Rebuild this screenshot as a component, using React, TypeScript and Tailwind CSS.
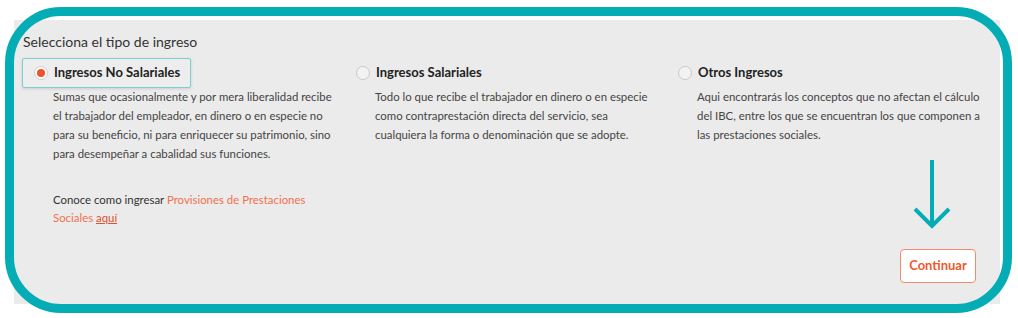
import { useState } from "react";

const opciones = [
  {
    id: "no-salariales",
    label: "Ingresos No Salariales",
    lines: [
      "Sumas que ocasionalmente y por mera liberalidad recibe",
      "el trabajador del empleador, en dinero o en especie no",
      "para su beneficio, ni para enriquecer su patrimonio, sino",
      "para desempeñar a cabalidad sus funciones.",
    ],
  },
  {
    id: "salariales",
    label: "Ingresos Salariales",
    lines: [
      "Todo lo que recibe el trabajador en dinero o en especie",
      "como contraprestación directa del servicio, sea",
      "cualquiera la forma o denominación que se adopte.",
    ],
  },
  {
    id: "otros",
    label: "Otros Ingresos",
    lines: [
      "Aqui encontrarás los conceptos que no afectan el cálculo",
      "del IBC, entre los que se encuentran los que componen a",
      "las prestaciones sociales.",
    ],
  },
];

export default function App() {
  const [tipo, setTipo] = useState("no-salariales");

  return (
    <div className="relative w-[1018px] h-[318px] bg-white pl-[14px] pt-[20px] font-['Lato',sans-serif] text-[#333]">
      {/* Panel */}
      <div className="flex flex-col w-[986px] h-[284px] bg-[#ebebeb] pl-[8px] pt-[13px] pr-[24px] pb-[21px]">
        <h2 className="ml-[1px] text-[14px] leading-[18px] text-[#333]">Selecciona el tipo de ingreso</h2>

        <div className="flex mt-[7px]">
          {opciones.map((o, i) => {
            const activo = tipo === o.id;
            return (
              <div key={o.id} className={i === 2 ? "w-[300px]" : "w-[322px]"}>
                <button
                  onClick={() => setTipo(o.id)}
                  className={
                    "flex items-center gap-[6px] h-[30px] pl-[11px] pr-[10px] rounded-[2px] border " +
                    (activo
                      ? "border-[#7ccfd2] bg-[#ededed] shadow-[0_1px_3px_rgba(0,0,0,0.12)]"
                      : "border-transparent")
                  }
                >
                  <span
                    className={
                      "flex items-center justify-center w-[14px] h-[14px] rounded-full border " +
                      (activo ? "bg-white border-[#cfcfcf]" : "bg-[#f2f2f2] border-[#c9c9c9]")
                    }
                  >
                    {activo && <span className="w-[8px] h-[8px] rounded-full bg-[#f0522a]" />}
                  </span>
                  <span className="text-[13px] font-bold text-[#222]">{o.label}</span>
                </button>
                <div className="ml-[31px] -mt-[1px] text-[11.4px] leading-[19px] text-[#444]">
                  {o.lines.map((l) => (
                    <p key={l} className="whitespace-nowrap">{l}</p>
                  ))}
                </div>
              </div>
            );
          })}
        </div>

        <div className="ml-[31px] mt-[28px] text-[11.4px] leading-[18px] text-[#333]">
          <p className="whitespace-nowrap">
            Conoce como ingresar <span className="text-[#f2704e]">Provisiones de Prestaciones</span>
          </p>
          <p className="whitespace-nowrap">
            <span className="text-[#f2704e]">Sociales</span>{" "}
            <a className="text-[#e4502d] underline">aquí</a>
          </p>
        </div>

        <div className="mt-auto flex justify-end">
          <button className="w-[76px] h-[34px] rounded-[4px] border border-[#f58a6a] bg-white text-[13px] font-bold text-[#f0582f]">
            Continuar
          </button>
        </div>
      </div>

      {/* Annotation: arrow */}
      <svg className="absolute left-[912px] top-[158px]" width="40" height="72" viewBox="0 0 40 72" fill="none">
        <path d="M20 2 V68 M3 51 L20 68 L37 51" stroke="#04adb6" strokeWidth="4" />
      </svg>

      {/* Annotation: teal frame */}
      <div className="pointer-events-none absolute left-[5px] top-[7px] w-[1007px] h-[306px] rounded-[56px] border-[9px] border-[#04adb6]" />
    </div>
  );
}
